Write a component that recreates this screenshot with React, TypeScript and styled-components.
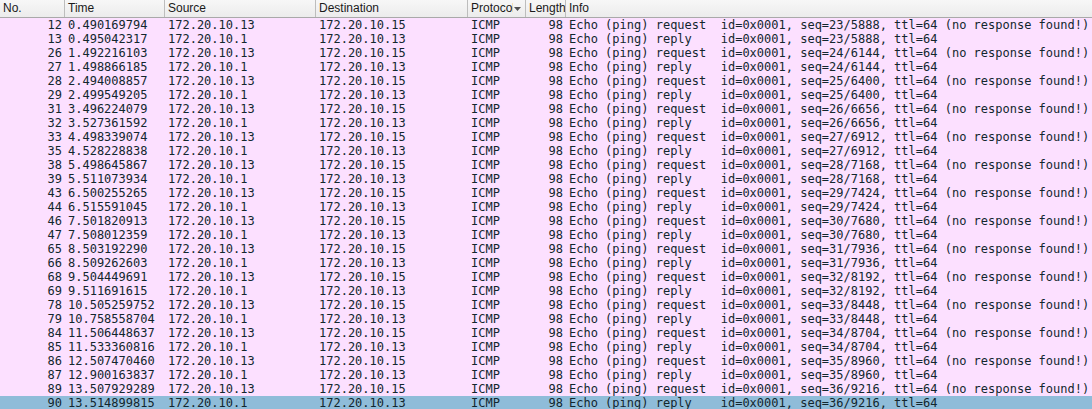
import React from "react";
import styled, { createGlobalStyle } from "styled-components";

const GlobalStyle = createGlobalStyle`
  html, body { margin: 0; padding: 0; background: #ffffff; }
  body { overflow: hidden; }
`;

const COLS = "65px 100px 151px 152px 58px 40px minmax(0, 1fr)";

const Table = styled.div`
  width: 1092px;
  height: 409px;
  overflow: hidden;
  background: #ffffff;
`;

const HeaderRow = styled.div`
  display: grid;
  grid-template-columns: ${COLS};
  height: 17px;
  border-bottom: 1px solid #a9a9a9;
  background: linear-gradient(#f7f7f7, #ececec);
  font-family: "Liberation Sans", Arial, sans-serif;
  font-size: 12px;
  color: #1a1a1a;
`;

const HeaderCell = styled.div<{ $last?: boolean }>`
  display: flex;
  align-items: center;
  min-width: 0;
  padding-left: 3px;
  border-right: ${(p) => (p.$last ? "none" : "1px solid #bdbdbd")};
  overflow: hidden;
  white-space: nowrap;
  line-height: 17px;
`;

const ClipText = styled.span`
  width: 42px;
  overflow: hidden;
  flex: none;
`;

const Arrow = styled.svg`
  flex: none;
  margin-left: 1px;
`;

const Row = styled.div<{ $selected?: boolean }>`
  display: grid;
  grid-template-columns: ${COLS};
  height: 14px;
  background: ${(p) => (p.$selected ? "#8fbcd9" : "#fce0ff")};
  color: #12272e;
  font-family: "DejaVu Sans Mono", "Liberation Mono", monospace;
  font-size: 12px;
  line-height: 14px;
`;

const Cell = styled.div<{ $right?: boolean }>`
  min-width: 0;
  padding-left: ${(p) => (p.$right ? "0" : "3px")};
  padding-right: ${(p) => (p.$right ? "3px" : "0")};
  text-align: ${(p) => (p.$right ? "right" : "left")};
  white-space: pre;
  overflow: hidden;
`;

type Pkt = { no: number; time: string; req: boolean; seq: number };

const packets: Pkt[] = [
  { no: 12, time: "0.490169794", req: true, seq: 23 },
  { no: 13, time: "0.495042317", req: false, seq: 23 },
  { no: 26, time: "1.492216103", req: true, seq: 24 },
  { no: 27, time: "1.498866185", req: false, seq: 24 },
  { no: 28, time: "2.494008857", req: true, seq: 25 },
  { no: 29, time: "2.499549205", req: false, seq: 25 },
  { no: 31, time: "3.496224079", req: true, seq: 26 },
  { no: 32, time: "3.527361592", req: false, seq: 26 },
  { no: 33, time: "4.498339074", req: true, seq: 27 },
  { no: 35, time: "4.528228838", req: false, seq: 27 },
  { no: 38, time: "5.498645867", req: true, seq: 28 },
  { no: 39, time: "5.511073934", req: false, seq: 28 },
  { no: 43, time: "6.500255265", req: true, seq: 29 },
  { no: 44, time: "6.515591045", req: false, seq: 29 },
  { no: 46, time: "7.501820913", req: true, seq: 30 },
  { no: 47, time: "7.508012359", req: false, seq: 30 },
  { no: 65, time: "8.503192290", req: true, seq: 31 },
  { no: 66, time: "8.509262603", req: false, seq: 31 },
  { no: 68, time: "9.504449691", req: true, seq: 32 },
  { no: 69, time: "9.511691615", req: false, seq: 32 },
  { no: 78, time: "10.505259752", req: true, seq: 33 },
  { no: 79, time: "10.758558704", req: false, seq: 33 },
  { no: 84, time: "11.506448637", req: true, seq: 34 },
  { no: 85, time: "11.533360816", req: false, seq: 34 },
  { no: 86, time: "12.507470460", req: true, seq: 35 },
  { no: 87, time: "12.900163837", req: false, seq: 35 },
  { no: 89, time: "13.507929289", req: true, seq: 36 },
  { no: 90, time: "13.514899815", req: false, seq: 36 },
];

function info(p: Pkt): string {
  const s = `${p.seq}/${p.seq * 256}`;
  return p.req
    ? `Echo (ping) request  id=0x0001, seq=${s}, ttl=64 (no response found!)`
    : `Echo (ping) reply    id=0x0001, seq=${s}, ttl=64`;
}

export default function App() {
  return (
    <>
      <GlobalStyle />
      <Table>
        <HeaderRow>
          <HeaderCell>No.</HeaderCell>
          <HeaderCell>Time</HeaderCell>
          <HeaderCell>Source</HeaderCell>
          <HeaderCell>Destination</HeaderCell>
          <HeaderCell>
            <ClipText>Protocol</ClipText>
            <Arrow width="7" height="4" viewBox="0 0 7 4">
              <path d="M0 0 L7 0 L3.5 4 Z" fill="#505050" />
            </Arrow>
          </HeaderCell>
          <HeaderCell>Length</HeaderCell>
          <HeaderCell $last>Info</HeaderCell>
        </HeaderRow>
        {packets.map((p) => (
          <Row key={p.no} $selected={p.no === 90}>
            <Cell $right>{p.no}</Cell>
            <Cell>{p.time}</Cell>
            <Cell>{p.req ? "172.20.10.13" : "172.20.10.1"}</Cell>
            <Cell>{p.req ? "172.20.10.15" : "172.20.10.13"}</Cell>
            <Cell>ICMP</Cell>
            <Cell $right>98</Cell>
            <Cell>{info(p)}</Cell>
          </Row>
        ))}
      </Table>
    </>
  );
}
